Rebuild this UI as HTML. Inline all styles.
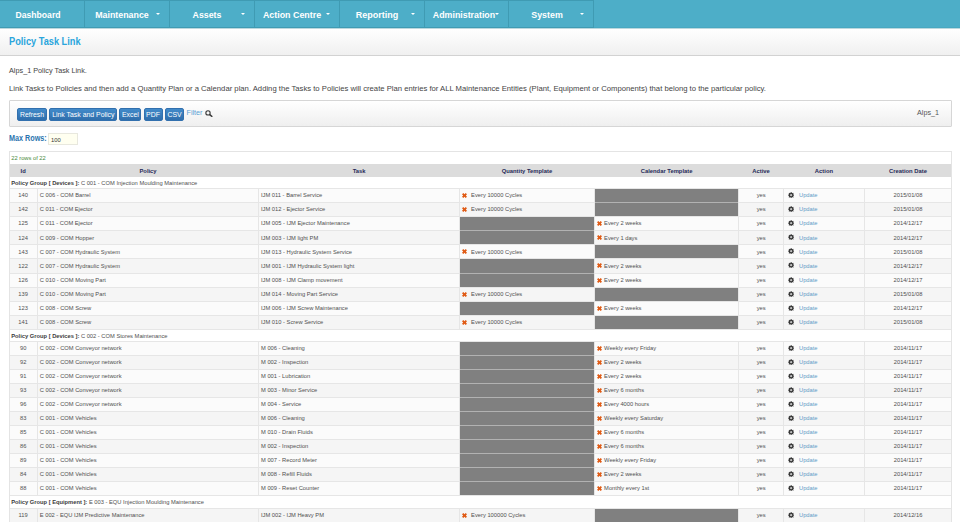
<!DOCTYPE html><html><head><meta charset="utf-8"><style>
html,body{margin:0;padding:0;}
body{width:960px;height:522px;overflow:hidden;background:#fff;position:relative;font-family:"Liberation Sans", sans-serif;}
div{box-sizing:border-box;}
.nav{position:absolute;left:0;top:0;width:960px;height:28px;background:#4daec8;border-bottom:1px solid #48a8c1;}
.ni{position:absolute;top:0;height:28px;border:1px solid #3f9bb3;border-left:none;}
.caret{position:absolute;width:0;height:0;border-left:2.3px solid transparent;border-right:2.3px solid transparent;border-top:2.7px solid #fff;}
.btn{position:absolute;top:107.5px;height:13px;border-radius:2px;background:linear-gradient(#428bca,#2f6eac);border:1px solid #3270ae;}
.hl{position:absolute;height:1px;}
.vl{position:absolute;width:1px;}
</style></head><body>
<div class="nav"></div>
<div style="position:absolute;left:0;top:28px;width:960px;height:1px;background:#bcd8de;z-index:1"></div>
<div class="ni" style="left:0px;width:85px"></div>
<div class="ni" style="left:85px;width:85px"></div>
<div class="ni" style="left:170px;width:85px"></div>
<div class="ni" style="left:255px;width:85px"></div>
<div class="ni" style="left:340px;width:85px"></div>
<div class="ni" style="left:425px;width:84px"></div>
<div class="ni" style="left:509px;width:85px"></div>
<div style="position:absolute;top:10px;font-size:9.4px;line-height:9.4px;color:#fff;white-space:nowrap;font-weight:bold;left:38.00px;transform-origin:0 0;transform: scaleX(0.921) translateX(-50%);">Dashboard</div>
<div style="position:absolute;top:10px;font-size:9.4px;line-height:9.4px;color:#fff;white-space:nowrap;font-weight:bold;left:122.35px;transform-origin:0 0;transform: scaleX(0.942) translateX(-50%);">Maintenance</div>
<div class="caret" style="left:156.00px;top:12.7px"></div>
<div style="position:absolute;top:10px;font-size:9.4px;line-height:9.4px;color:#fff;white-space:nowrap;font-weight:bold;left:207.20px;transform-origin:0 0;transform: scaleX(0.939) translateX(-50%);">Assets</div>
<div class="caret" style="left:240.70px;top:12.7px"></div>
<div style="position:absolute;top:10px;font-size:9.4px;line-height:9.4px;color:#fff;white-space:nowrap;font-weight:bold;left:292.40px;transform-origin:0 0;transform: scaleX(0.947) translateX(-50%);">Action Centre</div>
<div class="caret" style="left:325.70px;top:12.7px"></div>
<div style="position:absolute;top:10px;font-size:9.4px;line-height:9.4px;color:#fff;white-space:nowrap;font-weight:bold;left:377.00px;transform-origin:0 0;transform: scaleX(0.961) translateX(-50%);">Reporting</div>
<div class="caret" style="left:410.70px;top:12.7px"></div>
<div style="position:absolute;top:10px;font-size:9.4px;line-height:9.4px;color:#fff;white-space:nowrap;font-weight:bold;left:463.65px;transform-origin:0 0;transform: scaleX(0.942) translateX(-50%);">Administration</div>
<div class="caret" style="left:495.10px;top:12.7px"></div>
<div style="position:absolute;top:10px;font-size:9.4px;line-height:9.4px;color:#fff;white-space:nowrap;font-weight:bold;left:547.00px;transform-origin:0 0;transform: scaleX(0.945) translateX(-50%);">System</div>
<div class="caret" style="left:579.90px;top:12.7px"></div>
<div style="position:absolute;left:0;top:28px;width:960px;height:28px;background:linear-gradient(#ffffff,#f0f0f0);border-bottom:1px solid #d2d2d2"></div>
<div style="position:absolute;top:37px;font-size:10.0px;line-height:10.0px;color:#2aa5dc;white-space:nowrap;font-weight:bold;left:9.40px;transform-origin:0 0;transform: scaleX(0.922);">Policy Task Link</div>
<div style="position:absolute;top:67px;font-size:7.28px;line-height:7.28px;color:#444;white-space:nowrap;left:9.00px;transform-origin:0 0;">Alps_1 Policy Task Link.</div>
<div style="position:absolute;top:85px;font-size:7.67px;line-height:7.67px;color:#444;white-space:nowrap;left:9.00px;transform-origin:0 0;transform: scaleX(1.0035);">Link Tasks to Policies and then add a Quantity Plan or a Calendar plan. Adding the Tasks to Policies will create Plan entries for ALL Maintenance Entities (Plant, Equipment or Components) that belong to the particular policy.</div>
<div style="position:absolute;left:9px;top:100px;width:943px;height:27px;background:linear-gradient(#ffffff,#efefef);border:1px solid #d6d6d6;border-radius:1px"></div>
<div class="btn" style="left:17.10px;width:30.00px"></div>
<div style="position:absolute;top:112px;font-size:6.9px;line-height:6.9px;color:#fff;white-space:nowrap;left:32.10px;transform-origin:0 0;transform: translateX(-50%);">Refresh</div>
<div class="btn" style="left:49.10px;width:68.40px"></div>
<div style="position:absolute;top:112px;font-size:6.9px;line-height:6.9px;color:#fff;white-space:nowrap;left:83.30px;transform-origin:0 0;transform: translateX(-50%);">Link Task and Policy</div>
<div class="btn" style="left:119.40px;width:22.10px"></div>
<div style="position:absolute;top:112px;font-size:6.9px;line-height:6.9px;color:#fff;white-space:nowrap;left:130.45px;transform-origin:0 0;transform: translateX(-50%);">Excel</div>
<div class="btn" style="left:143.50px;width:19.00px"></div>
<div style="position:absolute;top:112px;font-size:6.9px;line-height:6.9px;color:#fff;white-space:nowrap;left:153.00px;transform-origin:0 0;transform: translateX(-50%);">PDF</div>
<div class="btn" style="left:164.60px;width:19.80px"></div>
<div style="position:absolute;top:112px;font-size:6.9px;line-height:6.9px;color:#fff;white-space:nowrap;left:174.50px;transform-origin:0 0;transform: translateX(-50%);">CSV</div>
<div style="position:absolute;top:109px;font-size:7.2px;line-height:7.2px;color:#5a9fd4;white-space:nowrap;left:186.50px;transform-origin:0 0;">Filter</div>
<svg style="position:absolute;left:205px;top:110px" width="8" height="7" viewBox="0 0 8 7"><circle cx="3" cy="2.9" r="2.15" fill="none" stroke="#3a3a3a" stroke-width="1.1"/><line x1="4.5" y1="4.4" x2="7.3" y2="6.8" stroke="#3a3a3a" stroke-width="1.5"/></svg>
<div style="position:absolute;top:109px;font-size:7.2px;line-height:7.2px;color:#555;white-space:nowrap;right:21.00px;transform-origin:100% 0;">Alps_1</div>
<div style="position:absolute;top:134px;font-size:8.5px;line-height:8.5px;color:#2a74ae;white-space:nowrap;font-weight:bold;left:8.85px;transform-origin:0 0;transform: scaleX(0.85);">Max Rows:</div>
<div style="position:absolute;left:48.4px;top:133.3px;width:29.2px;height:11.3px;background:#fffff0;border:1px solid #e8e8de"></div>
<div style="position:absolute;top:138px;font-size:5.8px;line-height:5.8px;color:#333;white-space:nowrap;left:51.00px;transform-origin:0 0;">100</div>
<div style="position:absolute;left:9.0px;top:151px;width:942.50px;height:400px;background:#fff;border:1px solid #e4e4e4"></div>
<div style="position:absolute;top:156px;font-size:5.75px;line-height:5.75px;color:#4a8a3a;white-space:nowrap;left:11.25px;transform-origin:0 0;">22 rows of 22</div>
<div style="position:absolute;left:10.0px;top:164px;width:941px;height:13px;background:#dcdcdc"></div>
<div style="position:absolute;top:169px;font-size:5.84px;line-height:5.84px;color:#262a58;white-space:nowrap;font-weight:bold;left:23.15px;transform-origin:0 0;transform: translateX(-50%);">Id</div>
<div style="position:absolute;top:169px;font-size:5.84px;line-height:5.84px;color:#262a58;white-space:nowrap;font-weight:bold;left:148.03px;transform-origin:0 0;transform: translateX(-50%);">Policy</div>
<div style="position:absolute;top:169px;font-size:5.84px;line-height:5.84px;color:#262a58;white-space:nowrap;font-weight:bold;left:359.07px;transform-origin:0 0;transform: translateX(-50%);">Task</div>
<div style="position:absolute;top:169px;font-size:5.84px;line-height:5.84px;color:#262a58;white-space:nowrap;font-weight:bold;left:526.95px;transform-origin:0 0;transform: translateX(-50%);">Quantity Template</div>
<div style="position:absolute;top:169px;font-size:5.84px;line-height:5.84px;color:#262a58;white-space:nowrap;font-weight:bold;left:666.62px;transform-origin:0 0;transform: translateX(-50%);">Calendar Template</div>
<div style="position:absolute;top:169px;font-size:5.84px;line-height:5.84px;color:#262a58;white-space:nowrap;font-weight:bold;left:761.12px;transform-origin:0 0;transform: translateX(-50%);">Active</div>
<div style="position:absolute;top:169px;font-size:5.84px;line-height:5.84px;color:#262a58;white-space:nowrap;font-weight:bold;left:823.95px;transform-origin:0 0;transform: translateX(-50%);">Action</div>
<div style="position:absolute;top:169px;font-size:5.84px;line-height:5.84px;color:#262a58;white-space:nowrap;font-weight:bold;left:907.95px;transform-origin:0 0;transform: translateX(-50%);">Creation Date</div>
<div style="position:absolute;left:10.0px;top:177px;width:941px;height:11px;background:#fff"></div>
<div style="position:absolute;left:10.0px;top:188px;width:941px;height:14px;background:#fbfbfb"></div>
<div style="position:absolute;left:10.0px;top:202px;width:941px;height:14px;background:#f5f5f5"></div>
<div style="position:absolute;left:10.0px;top:216px;width:941px;height:14px;background:#fbfbfb"></div>
<div style="position:absolute;left:10.0px;top:230px;width:941px;height:14px;background:#f5f5f5"></div>
<div style="position:absolute;left:10.0px;top:244px;width:941px;height:14px;background:#fbfbfb"></div>
<div style="position:absolute;left:10.0px;top:258px;width:941px;height:15px;background:#f5f5f5"></div>
<div style="position:absolute;left:10.0px;top:273px;width:941px;height:14px;background:#fbfbfb"></div>
<div style="position:absolute;left:10.0px;top:287px;width:941px;height:14px;background:#f5f5f5"></div>
<div style="position:absolute;left:10.0px;top:301px;width:941px;height:14px;background:#fbfbfb"></div>
<div style="position:absolute;left:10.0px;top:315px;width:941px;height:14px;background:#f5f5f5"></div>
<div style="position:absolute;left:10.0px;top:329px;width:941px;height:12px;background:#fff"></div>
<div style="position:absolute;left:10.0px;top:341px;width:941px;height:14px;background:#fbfbfb"></div>
<div style="position:absolute;left:10.0px;top:355px;width:941px;height:14px;background:#f5f5f5"></div>
<div style="position:absolute;left:10.0px;top:369px;width:941px;height:14px;background:#fbfbfb"></div>
<div style="position:absolute;left:10.0px;top:383px;width:941px;height:14px;background:#f5f5f5"></div>
<div style="position:absolute;left:10.0px;top:397px;width:941px;height:14px;background:#fbfbfb"></div>
<div style="position:absolute;left:10.0px;top:411px;width:941px;height:14px;background:#f5f5f5"></div>
<div style="position:absolute;left:10.0px;top:425px;width:941px;height:14px;background:#fbfbfb"></div>
<div style="position:absolute;left:10.0px;top:439px;width:941px;height:14px;background:#f5f5f5"></div>
<div style="position:absolute;left:10.0px;top:453px;width:941px;height:14px;background:#fbfbfb"></div>
<div style="position:absolute;left:10.0px;top:467px;width:941px;height:14px;background:#f5f5f5"></div>
<div style="position:absolute;left:10.0px;top:481px;width:941px;height:14px;background:#fbfbfb"></div>
<div style="position:absolute;left:10.0px;top:495px;width:941px;height:13px;background:#fff"></div>
<div style="position:absolute;left:10.0px;top:508px;width:941px;height:14px;background:#f5f5f5"></div>
<div class="hl" style="left:10.0px;top:188px;width:941px;background:#e6e6e6"></div>
<div class="hl" style="left:10.0px;top:202px;width:941px;background:#e6e6e6"></div>
<div class="hl" style="left:10.0px;top:216px;width:941px;background:#e6e6e6"></div>
<div class="hl" style="left:10.0px;top:230px;width:941px;background:#e6e6e6"></div>
<div class="hl" style="left:10.0px;top:244px;width:941px;background:#e6e6e6"></div>
<div class="hl" style="left:10.0px;top:258px;width:941px;background:#e6e6e6"></div>
<div class="hl" style="left:10.0px;top:273px;width:941px;background:#e6e6e6"></div>
<div class="hl" style="left:10.0px;top:287px;width:941px;background:#e6e6e6"></div>
<div class="hl" style="left:10.0px;top:301px;width:941px;background:#e6e6e6"></div>
<div class="hl" style="left:10.0px;top:315px;width:941px;background:#e6e6e6"></div>
<div class="hl" style="left:10.0px;top:329px;width:941px;background:#e6e6e6"></div>
<div class="hl" style="left:10.0px;top:341px;width:941px;background:#e6e6e6"></div>
<div class="hl" style="left:10.0px;top:355px;width:941px;background:#e6e6e6"></div>
<div class="hl" style="left:10.0px;top:369px;width:941px;background:#e6e6e6"></div>
<div class="hl" style="left:10.0px;top:383px;width:941px;background:#e6e6e6"></div>
<div class="hl" style="left:10.0px;top:397px;width:941px;background:#e6e6e6"></div>
<div class="hl" style="left:10.0px;top:411px;width:941px;background:#e6e6e6"></div>
<div class="hl" style="left:10.0px;top:425px;width:941px;background:#e6e6e6"></div>
<div class="hl" style="left:10.0px;top:439px;width:941px;background:#e6e6e6"></div>
<div class="hl" style="left:10.0px;top:453px;width:941px;background:#e6e6e6"></div>
<div class="hl" style="left:10.0px;top:467px;width:941px;background:#e6e6e6"></div>
<div class="hl" style="left:10.0px;top:481px;width:941px;background:#e6e6e6"></div>
<div class="hl" style="left:10.0px;top:495px;width:941px;background:#e6e6e6"></div>
<div class="hl" style="left:10.0px;top:508px;width:941px;background:#e6e6e6"></div>
<div class="vl" style="left:37px;top:188px;height:14px;background:#e6e6e6"></div>
<div class="vl" style="left:258px;top:188px;height:14px;background:#e6e6e6"></div>
<div class="vl" style="left:459px;top:188px;height:14px;background:#e6e6e6"></div>
<div class="vl" style="left:594px;top:188px;height:14px;background:#e6e6e6"></div>
<div class="vl" style="left:738px;top:188px;height:14px;background:#e6e6e6"></div>
<div class="vl" style="left:783px;top:188px;height:14px;background:#e6e6e6"></div>
<div class="vl" style="left:864px;top:188px;height:14px;background:#e6e6e6"></div>
<div class="vl" style="left:37px;top:202px;height:14px;background:#e6e6e6"></div>
<div class="vl" style="left:258px;top:202px;height:14px;background:#e6e6e6"></div>
<div class="vl" style="left:459px;top:202px;height:14px;background:#e6e6e6"></div>
<div class="vl" style="left:594px;top:202px;height:14px;background:#e6e6e6"></div>
<div class="vl" style="left:738px;top:202px;height:14px;background:#e6e6e6"></div>
<div class="vl" style="left:783px;top:202px;height:14px;background:#e6e6e6"></div>
<div class="vl" style="left:864px;top:202px;height:14px;background:#e6e6e6"></div>
<div class="vl" style="left:37px;top:216px;height:14px;background:#e6e6e6"></div>
<div class="vl" style="left:258px;top:216px;height:14px;background:#e6e6e6"></div>
<div class="vl" style="left:459px;top:216px;height:14px;background:#e6e6e6"></div>
<div class="vl" style="left:594px;top:216px;height:14px;background:#e6e6e6"></div>
<div class="vl" style="left:738px;top:216px;height:14px;background:#e6e6e6"></div>
<div class="vl" style="left:783px;top:216px;height:14px;background:#e6e6e6"></div>
<div class="vl" style="left:864px;top:216px;height:14px;background:#e6e6e6"></div>
<div class="vl" style="left:37px;top:230px;height:14px;background:#e6e6e6"></div>
<div class="vl" style="left:258px;top:230px;height:14px;background:#e6e6e6"></div>
<div class="vl" style="left:459px;top:230px;height:14px;background:#e6e6e6"></div>
<div class="vl" style="left:594px;top:230px;height:14px;background:#e6e6e6"></div>
<div class="vl" style="left:738px;top:230px;height:14px;background:#e6e6e6"></div>
<div class="vl" style="left:783px;top:230px;height:14px;background:#e6e6e6"></div>
<div class="vl" style="left:864px;top:230px;height:14px;background:#e6e6e6"></div>
<div class="vl" style="left:37px;top:244px;height:14px;background:#e6e6e6"></div>
<div class="vl" style="left:258px;top:244px;height:14px;background:#e6e6e6"></div>
<div class="vl" style="left:459px;top:244px;height:14px;background:#e6e6e6"></div>
<div class="vl" style="left:594px;top:244px;height:14px;background:#e6e6e6"></div>
<div class="vl" style="left:738px;top:244px;height:14px;background:#e6e6e6"></div>
<div class="vl" style="left:783px;top:244px;height:14px;background:#e6e6e6"></div>
<div class="vl" style="left:864px;top:244px;height:14px;background:#e6e6e6"></div>
<div class="vl" style="left:37px;top:258px;height:15px;background:#e6e6e6"></div>
<div class="vl" style="left:258px;top:258px;height:15px;background:#e6e6e6"></div>
<div class="vl" style="left:459px;top:258px;height:15px;background:#e6e6e6"></div>
<div class="vl" style="left:594px;top:258px;height:15px;background:#e6e6e6"></div>
<div class="vl" style="left:738px;top:258px;height:15px;background:#e6e6e6"></div>
<div class="vl" style="left:783px;top:258px;height:15px;background:#e6e6e6"></div>
<div class="vl" style="left:864px;top:258px;height:15px;background:#e6e6e6"></div>
<div class="vl" style="left:37px;top:273px;height:14px;background:#e6e6e6"></div>
<div class="vl" style="left:258px;top:273px;height:14px;background:#e6e6e6"></div>
<div class="vl" style="left:459px;top:273px;height:14px;background:#e6e6e6"></div>
<div class="vl" style="left:594px;top:273px;height:14px;background:#e6e6e6"></div>
<div class="vl" style="left:738px;top:273px;height:14px;background:#e6e6e6"></div>
<div class="vl" style="left:783px;top:273px;height:14px;background:#e6e6e6"></div>
<div class="vl" style="left:864px;top:273px;height:14px;background:#e6e6e6"></div>
<div class="vl" style="left:37px;top:287px;height:14px;background:#e6e6e6"></div>
<div class="vl" style="left:258px;top:287px;height:14px;background:#e6e6e6"></div>
<div class="vl" style="left:459px;top:287px;height:14px;background:#e6e6e6"></div>
<div class="vl" style="left:594px;top:287px;height:14px;background:#e6e6e6"></div>
<div class="vl" style="left:738px;top:287px;height:14px;background:#e6e6e6"></div>
<div class="vl" style="left:783px;top:287px;height:14px;background:#e6e6e6"></div>
<div class="vl" style="left:864px;top:287px;height:14px;background:#e6e6e6"></div>
<div class="vl" style="left:37px;top:301px;height:14px;background:#e6e6e6"></div>
<div class="vl" style="left:258px;top:301px;height:14px;background:#e6e6e6"></div>
<div class="vl" style="left:459px;top:301px;height:14px;background:#e6e6e6"></div>
<div class="vl" style="left:594px;top:301px;height:14px;background:#e6e6e6"></div>
<div class="vl" style="left:738px;top:301px;height:14px;background:#e6e6e6"></div>
<div class="vl" style="left:783px;top:301px;height:14px;background:#e6e6e6"></div>
<div class="vl" style="left:864px;top:301px;height:14px;background:#e6e6e6"></div>
<div class="vl" style="left:37px;top:315px;height:14px;background:#e6e6e6"></div>
<div class="vl" style="left:258px;top:315px;height:14px;background:#e6e6e6"></div>
<div class="vl" style="left:459px;top:315px;height:14px;background:#e6e6e6"></div>
<div class="vl" style="left:594px;top:315px;height:14px;background:#e6e6e6"></div>
<div class="vl" style="left:738px;top:315px;height:14px;background:#e6e6e6"></div>
<div class="vl" style="left:783px;top:315px;height:14px;background:#e6e6e6"></div>
<div class="vl" style="left:864px;top:315px;height:14px;background:#e6e6e6"></div>
<div class="vl" style="left:37px;top:341px;height:14px;background:#e6e6e6"></div>
<div class="vl" style="left:258px;top:341px;height:14px;background:#e6e6e6"></div>
<div class="vl" style="left:459px;top:341px;height:14px;background:#e6e6e6"></div>
<div class="vl" style="left:594px;top:341px;height:14px;background:#e6e6e6"></div>
<div class="vl" style="left:738px;top:341px;height:14px;background:#e6e6e6"></div>
<div class="vl" style="left:783px;top:341px;height:14px;background:#e6e6e6"></div>
<div class="vl" style="left:864px;top:341px;height:14px;background:#e6e6e6"></div>
<div class="vl" style="left:37px;top:355px;height:14px;background:#e6e6e6"></div>
<div class="vl" style="left:258px;top:355px;height:14px;background:#e6e6e6"></div>
<div class="vl" style="left:459px;top:355px;height:14px;background:#e6e6e6"></div>
<div class="vl" style="left:594px;top:355px;height:14px;background:#e6e6e6"></div>
<div class="vl" style="left:738px;top:355px;height:14px;background:#e6e6e6"></div>
<div class="vl" style="left:783px;top:355px;height:14px;background:#e6e6e6"></div>
<div class="vl" style="left:864px;top:355px;height:14px;background:#e6e6e6"></div>
<div class="vl" style="left:37px;top:369px;height:14px;background:#e6e6e6"></div>
<div class="vl" style="left:258px;top:369px;height:14px;background:#e6e6e6"></div>
<div class="vl" style="left:459px;top:369px;height:14px;background:#e6e6e6"></div>
<div class="vl" style="left:594px;top:369px;height:14px;background:#e6e6e6"></div>
<div class="vl" style="left:738px;top:369px;height:14px;background:#e6e6e6"></div>
<div class="vl" style="left:783px;top:369px;height:14px;background:#e6e6e6"></div>
<div class="vl" style="left:864px;top:369px;height:14px;background:#e6e6e6"></div>
<div class="vl" style="left:37px;top:383px;height:14px;background:#e6e6e6"></div>
<div class="vl" style="left:258px;top:383px;height:14px;background:#e6e6e6"></div>
<div class="vl" style="left:459px;top:383px;height:14px;background:#e6e6e6"></div>
<div class="vl" style="left:594px;top:383px;height:14px;background:#e6e6e6"></div>
<div class="vl" style="left:738px;top:383px;height:14px;background:#e6e6e6"></div>
<div class="vl" style="left:783px;top:383px;height:14px;background:#e6e6e6"></div>
<div class="vl" style="left:864px;top:383px;height:14px;background:#e6e6e6"></div>
<div class="vl" style="left:37px;top:397px;height:14px;background:#e6e6e6"></div>
<div class="vl" style="left:258px;top:397px;height:14px;background:#e6e6e6"></div>
<div class="vl" style="left:459px;top:397px;height:14px;background:#e6e6e6"></div>
<div class="vl" style="left:594px;top:397px;height:14px;background:#e6e6e6"></div>
<div class="vl" style="left:738px;top:397px;height:14px;background:#e6e6e6"></div>
<div class="vl" style="left:783px;top:397px;height:14px;background:#e6e6e6"></div>
<div class="vl" style="left:864px;top:397px;height:14px;background:#e6e6e6"></div>
<div class="vl" style="left:37px;top:411px;height:14px;background:#e6e6e6"></div>
<div class="vl" style="left:258px;top:411px;height:14px;background:#e6e6e6"></div>
<div class="vl" style="left:459px;top:411px;height:14px;background:#e6e6e6"></div>
<div class="vl" style="left:594px;top:411px;height:14px;background:#e6e6e6"></div>
<div class="vl" style="left:738px;top:411px;height:14px;background:#e6e6e6"></div>
<div class="vl" style="left:783px;top:411px;height:14px;background:#e6e6e6"></div>
<div class="vl" style="left:864px;top:411px;height:14px;background:#e6e6e6"></div>
<div class="vl" style="left:37px;top:425px;height:14px;background:#e6e6e6"></div>
<div class="vl" style="left:258px;top:425px;height:14px;background:#e6e6e6"></div>
<div class="vl" style="left:459px;top:425px;height:14px;background:#e6e6e6"></div>
<div class="vl" style="left:594px;top:425px;height:14px;background:#e6e6e6"></div>
<div class="vl" style="left:738px;top:425px;height:14px;background:#e6e6e6"></div>
<div class="vl" style="left:783px;top:425px;height:14px;background:#e6e6e6"></div>
<div class="vl" style="left:864px;top:425px;height:14px;background:#e6e6e6"></div>
<div class="vl" style="left:37px;top:439px;height:14px;background:#e6e6e6"></div>
<div class="vl" style="left:258px;top:439px;height:14px;background:#e6e6e6"></div>
<div class="vl" style="left:459px;top:439px;height:14px;background:#e6e6e6"></div>
<div class="vl" style="left:594px;top:439px;height:14px;background:#e6e6e6"></div>
<div class="vl" style="left:738px;top:439px;height:14px;background:#e6e6e6"></div>
<div class="vl" style="left:783px;top:439px;height:14px;background:#e6e6e6"></div>
<div class="vl" style="left:864px;top:439px;height:14px;background:#e6e6e6"></div>
<div class="vl" style="left:37px;top:453px;height:14px;background:#e6e6e6"></div>
<div class="vl" style="left:258px;top:453px;height:14px;background:#e6e6e6"></div>
<div class="vl" style="left:459px;top:453px;height:14px;background:#e6e6e6"></div>
<div class="vl" style="left:594px;top:453px;height:14px;background:#e6e6e6"></div>
<div class="vl" style="left:738px;top:453px;height:14px;background:#e6e6e6"></div>
<div class="vl" style="left:783px;top:453px;height:14px;background:#e6e6e6"></div>
<div class="vl" style="left:864px;top:453px;height:14px;background:#e6e6e6"></div>
<div class="vl" style="left:37px;top:467px;height:14px;background:#e6e6e6"></div>
<div class="vl" style="left:258px;top:467px;height:14px;background:#e6e6e6"></div>
<div class="vl" style="left:459px;top:467px;height:14px;background:#e6e6e6"></div>
<div class="vl" style="left:594px;top:467px;height:14px;background:#e6e6e6"></div>
<div class="vl" style="left:738px;top:467px;height:14px;background:#e6e6e6"></div>
<div class="vl" style="left:783px;top:467px;height:14px;background:#e6e6e6"></div>
<div class="vl" style="left:864px;top:467px;height:14px;background:#e6e6e6"></div>
<div class="vl" style="left:37px;top:481px;height:14px;background:#e6e6e6"></div>
<div class="vl" style="left:258px;top:481px;height:14px;background:#e6e6e6"></div>
<div class="vl" style="left:459px;top:481px;height:14px;background:#e6e6e6"></div>
<div class="vl" style="left:594px;top:481px;height:14px;background:#e6e6e6"></div>
<div class="vl" style="left:738px;top:481px;height:14px;background:#e6e6e6"></div>
<div class="vl" style="left:783px;top:481px;height:14px;background:#e6e6e6"></div>
<div class="vl" style="left:864px;top:481px;height:14px;background:#e6e6e6"></div>
<div class="vl" style="left:37px;top:508px;height:14px;background:#e6e6e6"></div>
<div class="vl" style="left:258px;top:508px;height:14px;background:#e6e6e6"></div>
<div class="vl" style="left:459px;top:508px;height:14px;background:#e6e6e6"></div>
<div class="vl" style="left:594px;top:508px;height:14px;background:#e6e6e6"></div>
<div class="vl" style="left:738px;top:508px;height:14px;background:#e6e6e6"></div>
<div class="vl" style="left:783px;top:508px;height:14px;background:#e6e6e6"></div>
<div class="vl" style="left:864px;top:508px;height:14px;background:#e6e6e6"></div>
<div style="position:absolute;left:595px;top:189px;width:143px;height:13px;background:#808080"></div>
<div style="position:absolute;left:595px;top:203px;width:143px;height:13px;background:#808080"></div>
<div class="hl" style="left:595px;top:202px;width:143px;background:#b2b2b2"></div>
<div style="position:absolute;left:460px;top:217px;width:134px;height:13px;background:#808080"></div>
<div style="position:absolute;left:460px;top:231px;width:134px;height:13px;background:#808080"></div>
<div class="hl" style="left:460px;top:230px;width:134px;background:#b2b2b2"></div>
<div style="position:absolute;left:595px;top:245px;width:143px;height:13px;background:#808080"></div>
<div style="position:absolute;left:460px;top:259px;width:134px;height:14px;background:#808080"></div>
<div style="position:absolute;left:460px;top:274px;width:134px;height:13px;background:#808080"></div>
<div class="hl" style="left:460px;top:273px;width:134px;background:#b2b2b2"></div>
<div style="position:absolute;left:595px;top:288px;width:143px;height:13px;background:#808080"></div>
<div style="position:absolute;left:460px;top:302px;width:134px;height:13px;background:#808080"></div>
<div style="position:absolute;left:595px;top:316px;width:143px;height:13px;background:#808080"></div>
<div style="position:absolute;left:460px;top:342px;width:134px;height:13px;background:#808080"></div>
<div style="position:absolute;left:460px;top:356px;width:134px;height:13px;background:#808080"></div>
<div class="hl" style="left:460px;top:355px;width:134px;background:#b2b2b2"></div>
<div style="position:absolute;left:460px;top:370px;width:134px;height:13px;background:#808080"></div>
<div class="hl" style="left:460px;top:369px;width:134px;background:#b2b2b2"></div>
<div style="position:absolute;left:460px;top:384px;width:134px;height:13px;background:#808080"></div>
<div class="hl" style="left:460px;top:383px;width:134px;background:#b2b2b2"></div>
<div style="position:absolute;left:460px;top:398px;width:134px;height:13px;background:#808080"></div>
<div class="hl" style="left:460px;top:397px;width:134px;background:#b2b2b2"></div>
<div style="position:absolute;left:460px;top:412px;width:134px;height:13px;background:#808080"></div>
<div class="hl" style="left:460px;top:411px;width:134px;background:#b2b2b2"></div>
<div style="position:absolute;left:460px;top:426px;width:134px;height:13px;background:#808080"></div>
<div class="hl" style="left:460px;top:425px;width:134px;background:#b2b2b2"></div>
<div style="position:absolute;left:460px;top:440px;width:134px;height:13px;background:#808080"></div>
<div class="hl" style="left:460px;top:439px;width:134px;background:#b2b2b2"></div>
<div style="position:absolute;left:460px;top:454px;width:134px;height:13px;background:#808080"></div>
<div class="hl" style="left:460px;top:453px;width:134px;background:#b2b2b2"></div>
<div style="position:absolute;left:460px;top:468px;width:134px;height:13px;background:#808080"></div>
<div class="hl" style="left:460px;top:467px;width:134px;background:#b2b2b2"></div>
<div style="position:absolute;left:460px;top:482px;width:134px;height:13px;background:#808080"></div>
<div class="hl" style="left:460px;top:481px;width:134px;background:#b2b2b2"></div>
<div style="position:absolute;left:595px;top:509px;width:143px;height:13px;background:#808080"></div>
<div style="position:absolute;top:181px;font-size:5.75px;line-height:5.75px;color:#505050;white-space:nowrap;left:11.25px;transform-origin:0 0;"><b style="color:#3c3c3c">Policy Group [ Devices ]:</b> C 001 - COM Injection Moulding Maintenance</div>
<div style="position:absolute;top:193px;font-size:5.75px;line-height:5.75px;color:#505050;white-space:nowrap;left:23.15px;transform-origin:0 0;transform: translateX(-50%);">140</div>
<div style="position:absolute;top:193px;font-size:5.75px;line-height:5.75px;color:#505050;white-space:nowrap;left:39.75px;transform-origin:0 0;">C 006 - COM Barrel</div>
<div style="position:absolute;top:193px;font-size:5.75px;line-height:5.75px;color:#505050;white-space:nowrap;left:261.00px;transform-origin:0 0;">IJM 011 - Barrel Service</div>
<svg style="position:absolute;left:462.30px;top:193.20px" width="5" height="5" viewBox="0 0 10 10"><path d="M0 2.6 L2.6 0 L5 2.4 L7.4 0 L10 2.6 L7.6 5 L10 7.4 L7.4 10 L5 7.6 L2.6 10 L0 7.4 L2.4 5 Z" fill="#e05a14"/></svg>
<div style="position:absolute;top:193px;font-size:5.75px;line-height:5.75px;color:#505050;white-space:nowrap;left:471.10px;transform-origin:0 0;">Every 10000 Cycles</div>
<div style="position:absolute;top:193px;font-size:5.75px;line-height:5.75px;color:#505050;white-space:nowrap;left:761.12px;transform-origin:0 0;transform: translateX(-50%);">yes</div>
<svg style="position:absolute;left:788.10px;top:191.90px" width="6.3" height="6.3" viewBox="0 0 16 16"><path fill="#333" fill-rule="evenodd" d="M13.64 6.65 L15.92 6.87 L15.92 9.13 L13.64 9.35 L12.95 11.03 L14.40 12.80 L12.80 14.40 L11.03 12.95 L9.35 13.64 L9.13 15.92 L6.87 15.92 L6.65 13.64 L4.97 12.95 L3.20 14.40 L1.60 12.80 L3.05 11.03 L2.36 9.35 L0.08 9.13 L0.08 6.87 L2.36 6.65 L3.05 4.97 L1.60 3.20 L3.20 1.60 L4.97 3.05 L6.65 2.36 L6.87 0.08 L9.13 0.08 L9.35 2.36 L11.03 3.05 L12.80 1.60 L14.40 3.20 L12.95 4.97Z "/><circle cx="8" cy="8" r="2.9" fill="#c0c0c0"/></svg>
<div style="position:absolute;top:193px;font-size:5.75px;line-height:5.75px;color:#5f9bc8;white-space:nowrap;left:799.00px;transform-origin:0 0;">Update</div>
<div style="position:absolute;top:193px;font-size:5.75px;line-height:5.75px;color:#505050;white-space:nowrap;left:907.95px;transform-origin:0 0;transform: translateX(-50%);">2015/01/08</div>
<div style="position:absolute;top:207px;font-size:5.75px;line-height:5.75px;color:#505050;white-space:nowrap;left:23.15px;transform-origin:0 0;transform: translateX(-50%);">142</div>
<div style="position:absolute;top:207px;font-size:5.75px;line-height:5.75px;color:#505050;white-space:nowrap;left:39.75px;transform-origin:0 0;">C 011 - COM Ejector</div>
<div style="position:absolute;top:207px;font-size:5.75px;line-height:5.75px;color:#505050;white-space:nowrap;left:261.00px;transform-origin:0 0;">IJM 012 - Ejector Service</div>
<svg style="position:absolute;left:462.30px;top:207.20px" width="5" height="5" viewBox="0 0 10 10"><path d="M0 2.6 L2.6 0 L5 2.4 L7.4 0 L10 2.6 L7.6 5 L10 7.4 L7.4 10 L5 7.6 L2.6 10 L0 7.4 L2.4 5 Z" fill="#e05a14"/></svg>
<div style="position:absolute;top:207px;font-size:5.75px;line-height:5.75px;color:#505050;white-space:nowrap;left:471.10px;transform-origin:0 0;">Every 10000 Cycles</div>
<div style="position:absolute;top:207px;font-size:5.75px;line-height:5.75px;color:#505050;white-space:nowrap;left:761.12px;transform-origin:0 0;transform: translateX(-50%);">yes</div>
<svg style="position:absolute;left:788.10px;top:205.90px" width="6.3" height="6.3" viewBox="0 0 16 16"><path fill="#333" fill-rule="evenodd" d="M13.64 6.65 L15.92 6.87 L15.92 9.13 L13.64 9.35 L12.95 11.03 L14.40 12.80 L12.80 14.40 L11.03 12.95 L9.35 13.64 L9.13 15.92 L6.87 15.92 L6.65 13.64 L4.97 12.95 L3.20 14.40 L1.60 12.80 L3.05 11.03 L2.36 9.35 L0.08 9.13 L0.08 6.87 L2.36 6.65 L3.05 4.97 L1.60 3.20 L3.20 1.60 L4.97 3.05 L6.65 2.36 L6.87 0.08 L9.13 0.08 L9.35 2.36 L11.03 3.05 L12.80 1.60 L14.40 3.20 L12.95 4.97Z "/><circle cx="8" cy="8" r="2.9" fill="#c0c0c0"/></svg>
<div style="position:absolute;top:207px;font-size:5.75px;line-height:5.75px;color:#5f9bc8;white-space:nowrap;left:799.00px;transform-origin:0 0;">Update</div>
<div style="position:absolute;top:207px;font-size:5.75px;line-height:5.75px;color:#505050;white-space:nowrap;left:907.95px;transform-origin:0 0;transform: translateX(-50%);">2015/01/08</div>
<div style="position:absolute;top:221px;font-size:5.75px;line-height:5.75px;color:#505050;white-space:nowrap;left:23.15px;transform-origin:0 0;transform: translateX(-50%);">125</div>
<div style="position:absolute;top:221px;font-size:5.75px;line-height:5.75px;color:#505050;white-space:nowrap;left:39.75px;transform-origin:0 0;">C 011 - COM Ejector</div>
<div style="position:absolute;top:221px;font-size:5.75px;line-height:5.75px;color:#505050;white-space:nowrap;left:261.00px;transform-origin:0 0;">IJM 005 - IJM Ejector Maintenance</div>
<svg style="position:absolute;left:596.90px;top:221.20px" width="5" height="5" viewBox="0 0 10 10"><path d="M0 2.6 L2.6 0 L5 2.4 L7.4 0 L10 2.6 L7.6 5 L10 7.4 L7.4 10 L5 7.6 L2.6 10 L0 7.4 L2.4 5 Z" fill="#e05a14"/></svg>
<div style="position:absolute;top:221px;font-size:5.75px;line-height:5.75px;color:#505050;white-space:nowrap;left:604.10px;transform-origin:0 0;">Every 2 weeks</div>
<div style="position:absolute;top:221px;font-size:5.75px;line-height:5.75px;color:#505050;white-space:nowrap;left:761.12px;transform-origin:0 0;transform: translateX(-50%);">yes</div>
<svg style="position:absolute;left:788.10px;top:219.90px" width="6.3" height="6.3" viewBox="0 0 16 16"><path fill="#333" fill-rule="evenodd" d="M13.64 6.65 L15.92 6.87 L15.92 9.13 L13.64 9.35 L12.95 11.03 L14.40 12.80 L12.80 14.40 L11.03 12.95 L9.35 13.64 L9.13 15.92 L6.87 15.92 L6.65 13.64 L4.97 12.95 L3.20 14.40 L1.60 12.80 L3.05 11.03 L2.36 9.35 L0.08 9.13 L0.08 6.87 L2.36 6.65 L3.05 4.97 L1.60 3.20 L3.20 1.60 L4.97 3.05 L6.65 2.36 L6.87 0.08 L9.13 0.08 L9.35 2.36 L11.03 3.05 L12.80 1.60 L14.40 3.20 L12.95 4.97Z "/><circle cx="8" cy="8" r="2.9" fill="#c0c0c0"/></svg>
<div style="position:absolute;top:221px;font-size:5.75px;line-height:5.75px;color:#5f9bc8;white-space:nowrap;left:799.00px;transform-origin:0 0;">Update</div>
<div style="position:absolute;top:221px;font-size:5.75px;line-height:5.75px;color:#505050;white-space:nowrap;left:907.95px;transform-origin:0 0;transform: translateX(-50%);">2014/12/17</div>
<div style="position:absolute;top:236px;font-size:5.75px;line-height:5.75px;color:#505050;white-space:nowrap;left:23.15px;transform-origin:0 0;transform: translateX(-50%);">124</div>
<div style="position:absolute;top:236px;font-size:5.75px;line-height:5.75px;color:#505050;white-space:nowrap;left:39.75px;transform-origin:0 0;">C 009 - COM Hopper</div>
<div style="position:absolute;top:236px;font-size:5.75px;line-height:5.75px;color:#505050;white-space:nowrap;left:261.00px;transform-origin:0 0;">IJM 003 - IJM light PM</div>
<svg style="position:absolute;left:596.90px;top:235.20px" width="5" height="5" viewBox="0 0 10 10"><path d="M0 2.6 L2.6 0 L5 2.4 L7.4 0 L10 2.6 L7.6 5 L10 7.4 L7.4 10 L5 7.6 L2.6 10 L0 7.4 L2.4 5 Z" fill="#e05a14"/></svg>
<div style="position:absolute;top:236px;font-size:5.75px;line-height:5.75px;color:#505050;white-space:nowrap;left:604.10px;transform-origin:0 0;">Every 1 days</div>
<div style="position:absolute;top:236px;font-size:5.75px;line-height:5.75px;color:#505050;white-space:nowrap;left:761.12px;transform-origin:0 0;transform: translateX(-50%);">yes</div>
<svg style="position:absolute;left:788.10px;top:233.90px" width="6.3" height="6.3" viewBox="0 0 16 16"><path fill="#333" fill-rule="evenodd" d="M13.64 6.65 L15.92 6.87 L15.92 9.13 L13.64 9.35 L12.95 11.03 L14.40 12.80 L12.80 14.40 L11.03 12.95 L9.35 13.64 L9.13 15.92 L6.87 15.92 L6.65 13.64 L4.97 12.95 L3.20 14.40 L1.60 12.80 L3.05 11.03 L2.36 9.35 L0.08 9.13 L0.08 6.87 L2.36 6.65 L3.05 4.97 L1.60 3.20 L3.20 1.60 L4.97 3.05 L6.65 2.36 L6.87 0.08 L9.13 0.08 L9.35 2.36 L11.03 3.05 L12.80 1.60 L14.40 3.20 L12.95 4.97Z "/><circle cx="8" cy="8" r="2.9" fill="#c0c0c0"/></svg>
<div style="position:absolute;top:236px;font-size:5.75px;line-height:5.75px;color:#5f9bc8;white-space:nowrap;left:799.00px;transform-origin:0 0;">Update</div>
<div style="position:absolute;top:236px;font-size:5.75px;line-height:5.75px;color:#505050;white-space:nowrap;left:907.95px;transform-origin:0 0;transform: translateX(-50%);">2014/12/17</div>
<div style="position:absolute;top:250px;font-size:5.75px;line-height:5.75px;color:#505050;white-space:nowrap;left:23.15px;transform-origin:0 0;transform: translateX(-50%);">143</div>
<div style="position:absolute;top:250px;font-size:5.75px;line-height:5.75px;color:#505050;white-space:nowrap;left:39.75px;transform-origin:0 0;">C 007 - COM Hydraulic System</div>
<div style="position:absolute;top:250px;font-size:5.75px;line-height:5.75px;color:#505050;white-space:nowrap;left:261.00px;transform-origin:0 0;">IJM 013 - Hydraulic System Service</div>
<svg style="position:absolute;left:462.30px;top:249.20px" width="5" height="5" viewBox="0 0 10 10"><path d="M0 2.6 L2.6 0 L5 2.4 L7.4 0 L10 2.6 L7.6 5 L10 7.4 L7.4 10 L5 7.6 L2.6 10 L0 7.4 L2.4 5 Z" fill="#e05a14"/></svg>
<div style="position:absolute;top:250px;font-size:5.75px;line-height:5.75px;color:#505050;white-space:nowrap;left:471.10px;transform-origin:0 0;">Every 10000 Cycles</div>
<div style="position:absolute;top:250px;font-size:5.75px;line-height:5.75px;color:#505050;white-space:nowrap;left:761.12px;transform-origin:0 0;transform: translateX(-50%);">yes</div>
<svg style="position:absolute;left:788.10px;top:247.90px" width="6.3" height="6.3" viewBox="0 0 16 16"><path fill="#333" fill-rule="evenodd" d="M13.64 6.65 L15.92 6.87 L15.92 9.13 L13.64 9.35 L12.95 11.03 L14.40 12.80 L12.80 14.40 L11.03 12.95 L9.35 13.64 L9.13 15.92 L6.87 15.92 L6.65 13.64 L4.97 12.95 L3.20 14.40 L1.60 12.80 L3.05 11.03 L2.36 9.35 L0.08 9.13 L0.08 6.87 L2.36 6.65 L3.05 4.97 L1.60 3.20 L3.20 1.60 L4.97 3.05 L6.65 2.36 L6.87 0.08 L9.13 0.08 L9.35 2.36 L11.03 3.05 L12.80 1.60 L14.40 3.20 L12.95 4.97Z "/><circle cx="8" cy="8" r="2.9" fill="#c0c0c0"/></svg>
<div style="position:absolute;top:250px;font-size:5.75px;line-height:5.75px;color:#5f9bc8;white-space:nowrap;left:799.00px;transform-origin:0 0;">Update</div>
<div style="position:absolute;top:250px;font-size:5.75px;line-height:5.75px;color:#505050;white-space:nowrap;left:907.95px;transform-origin:0 0;transform: translateX(-50%);">2015/01/08</div>
<div style="position:absolute;top:264px;font-size:5.75px;line-height:5.75px;color:#505050;white-space:nowrap;left:23.15px;transform-origin:0 0;transform: translateX(-50%);">122</div>
<div style="position:absolute;top:264px;font-size:5.75px;line-height:5.75px;color:#505050;white-space:nowrap;left:39.75px;transform-origin:0 0;">C 007 - COM Hydraulic System</div>
<div style="position:absolute;top:264px;font-size:5.75px;line-height:5.75px;color:#505050;white-space:nowrap;left:261.00px;transform-origin:0 0;">IJM 001 - IJM Hydraulic System light</div>
<svg style="position:absolute;left:596.90px;top:263.20px" width="5" height="5" viewBox="0 0 10 10"><path d="M0 2.6 L2.6 0 L5 2.4 L7.4 0 L10 2.6 L7.6 5 L10 7.4 L7.4 10 L5 7.6 L2.6 10 L0 7.4 L2.4 5 Z" fill="#e05a14"/></svg>
<div style="position:absolute;top:264px;font-size:5.75px;line-height:5.75px;color:#505050;white-space:nowrap;left:604.10px;transform-origin:0 0;">Every 2 weeks</div>
<div style="position:absolute;top:264px;font-size:5.75px;line-height:5.75px;color:#505050;white-space:nowrap;left:761.12px;transform-origin:0 0;transform: translateX(-50%);">yes</div>
<svg style="position:absolute;left:788.10px;top:261.90px" width="6.3" height="6.3" viewBox="0 0 16 16"><path fill="#333" fill-rule="evenodd" d="M13.64 6.65 L15.92 6.87 L15.92 9.13 L13.64 9.35 L12.95 11.03 L14.40 12.80 L12.80 14.40 L11.03 12.95 L9.35 13.64 L9.13 15.92 L6.87 15.92 L6.65 13.64 L4.97 12.95 L3.20 14.40 L1.60 12.80 L3.05 11.03 L2.36 9.35 L0.08 9.13 L0.08 6.87 L2.36 6.65 L3.05 4.97 L1.60 3.20 L3.20 1.60 L4.97 3.05 L6.65 2.36 L6.87 0.08 L9.13 0.08 L9.35 2.36 L11.03 3.05 L12.80 1.60 L14.40 3.20 L12.95 4.97Z "/><circle cx="8" cy="8" r="2.9" fill="#c0c0c0"/></svg>
<div style="position:absolute;top:264px;font-size:5.75px;line-height:5.75px;color:#5f9bc8;white-space:nowrap;left:799.00px;transform-origin:0 0;">Update</div>
<div style="position:absolute;top:264px;font-size:5.75px;line-height:5.75px;color:#505050;white-space:nowrap;left:907.95px;transform-origin:0 0;transform: translateX(-50%);">2014/12/17</div>
<div style="position:absolute;top:278px;font-size:5.75px;line-height:5.75px;color:#505050;white-space:nowrap;left:23.15px;transform-origin:0 0;transform: translateX(-50%);">126</div>
<div style="position:absolute;top:278px;font-size:5.75px;line-height:5.75px;color:#505050;white-space:nowrap;left:39.75px;transform-origin:0 0;">C 010 - COM Moving Part</div>
<div style="position:absolute;top:278px;font-size:5.75px;line-height:5.75px;color:#505050;white-space:nowrap;left:261.00px;transform-origin:0 0;">IJM 008 - IJM Clamp movement</div>
<svg style="position:absolute;left:596.90px;top:278.20px" width="5" height="5" viewBox="0 0 10 10"><path d="M0 2.6 L2.6 0 L5 2.4 L7.4 0 L10 2.6 L7.6 5 L10 7.4 L7.4 10 L5 7.6 L2.6 10 L0 7.4 L2.4 5 Z" fill="#e05a14"/></svg>
<div style="position:absolute;top:278px;font-size:5.75px;line-height:5.75px;color:#505050;white-space:nowrap;left:604.10px;transform-origin:0 0;">Every 2 weeks</div>
<div style="position:absolute;top:278px;font-size:5.75px;line-height:5.75px;color:#505050;white-space:nowrap;left:761.12px;transform-origin:0 0;transform: translateX(-50%);">yes</div>
<svg style="position:absolute;left:788.10px;top:276.90px" width="6.3" height="6.3" viewBox="0 0 16 16"><path fill="#333" fill-rule="evenodd" d="M13.64 6.65 L15.92 6.87 L15.92 9.13 L13.64 9.35 L12.95 11.03 L14.40 12.80 L12.80 14.40 L11.03 12.95 L9.35 13.64 L9.13 15.92 L6.87 15.92 L6.65 13.64 L4.97 12.95 L3.20 14.40 L1.60 12.80 L3.05 11.03 L2.36 9.35 L0.08 9.13 L0.08 6.87 L2.36 6.65 L3.05 4.97 L1.60 3.20 L3.20 1.60 L4.97 3.05 L6.65 2.36 L6.87 0.08 L9.13 0.08 L9.35 2.36 L11.03 3.05 L12.80 1.60 L14.40 3.20 L12.95 4.97Z "/><circle cx="8" cy="8" r="2.9" fill="#c0c0c0"/></svg>
<div style="position:absolute;top:278px;font-size:5.75px;line-height:5.75px;color:#5f9bc8;white-space:nowrap;left:799.00px;transform-origin:0 0;">Update</div>
<div style="position:absolute;top:278px;font-size:5.75px;line-height:5.75px;color:#505050;white-space:nowrap;left:907.95px;transform-origin:0 0;transform: translateX(-50%);">2014/12/17</div>
<div style="position:absolute;top:292px;font-size:5.75px;line-height:5.75px;color:#505050;white-space:nowrap;left:23.15px;transform-origin:0 0;transform: translateX(-50%);">139</div>
<div style="position:absolute;top:292px;font-size:5.75px;line-height:5.75px;color:#505050;white-space:nowrap;left:39.75px;transform-origin:0 0;">C 010 - COM Moving Part</div>
<div style="position:absolute;top:292px;font-size:5.75px;line-height:5.75px;color:#505050;white-space:nowrap;left:261.00px;transform-origin:0 0;">IJM 014 - Moving Part Service</div>
<svg style="position:absolute;left:462.30px;top:292.20px" width="5" height="5" viewBox="0 0 10 10"><path d="M0 2.6 L2.6 0 L5 2.4 L7.4 0 L10 2.6 L7.6 5 L10 7.4 L7.4 10 L5 7.6 L2.6 10 L0 7.4 L2.4 5 Z" fill="#e05a14"/></svg>
<div style="position:absolute;top:292px;font-size:5.75px;line-height:5.75px;color:#505050;white-space:nowrap;left:471.10px;transform-origin:0 0;">Every 10000 Cycles</div>
<div style="position:absolute;top:292px;font-size:5.75px;line-height:5.75px;color:#505050;white-space:nowrap;left:761.12px;transform-origin:0 0;transform: translateX(-50%);">yes</div>
<svg style="position:absolute;left:788.10px;top:290.90px" width="6.3" height="6.3" viewBox="0 0 16 16"><path fill="#333" fill-rule="evenodd" d="M13.64 6.65 L15.92 6.87 L15.92 9.13 L13.64 9.35 L12.95 11.03 L14.40 12.80 L12.80 14.40 L11.03 12.95 L9.35 13.64 L9.13 15.92 L6.87 15.92 L6.65 13.64 L4.97 12.95 L3.20 14.40 L1.60 12.80 L3.05 11.03 L2.36 9.35 L0.08 9.13 L0.08 6.87 L2.36 6.65 L3.05 4.97 L1.60 3.20 L3.20 1.60 L4.97 3.05 L6.65 2.36 L6.87 0.08 L9.13 0.08 L9.35 2.36 L11.03 3.05 L12.80 1.60 L14.40 3.20 L12.95 4.97Z "/><circle cx="8" cy="8" r="2.9" fill="#c0c0c0"/></svg>
<div style="position:absolute;top:292px;font-size:5.75px;line-height:5.75px;color:#5f9bc8;white-space:nowrap;left:799.00px;transform-origin:0 0;">Update</div>
<div style="position:absolute;top:292px;font-size:5.75px;line-height:5.75px;color:#505050;white-space:nowrap;left:907.95px;transform-origin:0 0;transform: translateX(-50%);">2015/01/08</div>
<div style="position:absolute;top:306px;font-size:5.75px;line-height:5.75px;color:#505050;white-space:nowrap;left:23.15px;transform-origin:0 0;transform: translateX(-50%);">123</div>
<div style="position:absolute;top:306px;font-size:5.75px;line-height:5.75px;color:#505050;white-space:nowrap;left:39.75px;transform-origin:0 0;">C 008 - COM Screw</div>
<div style="position:absolute;top:306px;font-size:5.75px;line-height:5.75px;color:#505050;white-space:nowrap;left:261.00px;transform-origin:0 0;">IJM 006 - IJM Screw Maintenance</div>
<svg style="position:absolute;left:596.90px;top:306.20px" width="5" height="5" viewBox="0 0 10 10"><path d="M0 2.6 L2.6 0 L5 2.4 L7.4 0 L10 2.6 L7.6 5 L10 7.4 L7.4 10 L5 7.6 L2.6 10 L0 7.4 L2.4 5 Z" fill="#e05a14"/></svg>
<div style="position:absolute;top:306px;font-size:5.75px;line-height:5.75px;color:#505050;white-space:nowrap;left:604.10px;transform-origin:0 0;">Every 2 weeks</div>
<div style="position:absolute;top:306px;font-size:5.75px;line-height:5.75px;color:#505050;white-space:nowrap;left:761.12px;transform-origin:0 0;transform: translateX(-50%);">yes</div>
<svg style="position:absolute;left:788.10px;top:304.90px" width="6.3" height="6.3" viewBox="0 0 16 16"><path fill="#333" fill-rule="evenodd" d="M13.64 6.65 L15.92 6.87 L15.92 9.13 L13.64 9.35 L12.95 11.03 L14.40 12.80 L12.80 14.40 L11.03 12.95 L9.35 13.64 L9.13 15.92 L6.87 15.92 L6.65 13.64 L4.97 12.95 L3.20 14.40 L1.60 12.80 L3.05 11.03 L2.36 9.35 L0.08 9.13 L0.08 6.87 L2.36 6.65 L3.05 4.97 L1.60 3.20 L3.20 1.60 L4.97 3.05 L6.65 2.36 L6.87 0.08 L9.13 0.08 L9.35 2.36 L11.03 3.05 L12.80 1.60 L14.40 3.20 L12.95 4.97Z "/><circle cx="8" cy="8" r="2.9" fill="#c0c0c0"/></svg>
<div style="position:absolute;top:306px;font-size:5.75px;line-height:5.75px;color:#5f9bc8;white-space:nowrap;left:799.00px;transform-origin:0 0;">Update</div>
<div style="position:absolute;top:306px;font-size:5.75px;line-height:5.75px;color:#505050;white-space:nowrap;left:907.95px;transform-origin:0 0;transform: translateX(-50%);">2014/12/17</div>
<div style="position:absolute;top:320px;font-size:5.75px;line-height:5.75px;color:#505050;white-space:nowrap;left:23.15px;transform-origin:0 0;transform: translateX(-50%);">141</div>
<div style="position:absolute;top:320px;font-size:5.75px;line-height:5.75px;color:#505050;white-space:nowrap;left:39.75px;transform-origin:0 0;">C 008 - COM Screw</div>
<div style="position:absolute;top:320px;font-size:5.75px;line-height:5.75px;color:#505050;white-space:nowrap;left:261.00px;transform-origin:0 0;">IJM 010 - Screw Service</div>
<svg style="position:absolute;left:462.30px;top:320.20px" width="5" height="5" viewBox="0 0 10 10"><path d="M0 2.6 L2.6 0 L5 2.4 L7.4 0 L10 2.6 L7.6 5 L10 7.4 L7.4 10 L5 7.6 L2.6 10 L0 7.4 L2.4 5 Z" fill="#e05a14"/></svg>
<div style="position:absolute;top:320px;font-size:5.75px;line-height:5.75px;color:#505050;white-space:nowrap;left:471.10px;transform-origin:0 0;">Every 10000 Cycles</div>
<div style="position:absolute;top:320px;font-size:5.75px;line-height:5.75px;color:#505050;white-space:nowrap;left:761.12px;transform-origin:0 0;transform: translateX(-50%);">yes</div>
<svg style="position:absolute;left:788.10px;top:318.90px" width="6.3" height="6.3" viewBox="0 0 16 16"><path fill="#333" fill-rule="evenodd" d="M13.64 6.65 L15.92 6.87 L15.92 9.13 L13.64 9.35 L12.95 11.03 L14.40 12.80 L12.80 14.40 L11.03 12.95 L9.35 13.64 L9.13 15.92 L6.87 15.92 L6.65 13.64 L4.97 12.95 L3.20 14.40 L1.60 12.80 L3.05 11.03 L2.36 9.35 L0.08 9.13 L0.08 6.87 L2.36 6.65 L3.05 4.97 L1.60 3.20 L3.20 1.60 L4.97 3.05 L6.65 2.36 L6.87 0.08 L9.13 0.08 L9.35 2.36 L11.03 3.05 L12.80 1.60 L14.40 3.20 L12.95 4.97Z "/><circle cx="8" cy="8" r="2.9" fill="#c0c0c0"/></svg>
<div style="position:absolute;top:320px;font-size:5.75px;line-height:5.75px;color:#5f9bc8;white-space:nowrap;left:799.00px;transform-origin:0 0;">Update</div>
<div style="position:absolute;top:320px;font-size:5.75px;line-height:5.75px;color:#505050;white-space:nowrap;left:907.95px;transform-origin:0 0;transform: translateX(-50%);">2015/01/08</div>
<div style="position:absolute;top:334px;font-size:5.75px;line-height:5.75px;color:#505050;white-space:nowrap;left:11.25px;transform-origin:0 0;"><b style="color:#3c3c3c">Policy Group [ Devices ]:</b> C 002 - COM Stores Maintenance</div>
<div style="position:absolute;top:346px;font-size:5.75px;line-height:5.75px;color:#505050;white-space:nowrap;left:23.15px;transform-origin:0 0;transform: translateX(-50%);">90</div>
<div style="position:absolute;top:346px;font-size:5.75px;line-height:5.75px;color:#505050;white-space:nowrap;left:39.75px;transform-origin:0 0;">C 002 - COM Conveyor network</div>
<div style="position:absolute;top:346px;font-size:5.75px;line-height:5.75px;color:#505050;white-space:nowrap;left:261.00px;transform-origin:0 0;">M 006 - Cleaning</div>
<svg style="position:absolute;left:596.90px;top:346.20px" width="5" height="5" viewBox="0 0 10 10"><path d="M0 2.6 L2.6 0 L5 2.4 L7.4 0 L10 2.6 L7.6 5 L10 7.4 L7.4 10 L5 7.6 L2.6 10 L0 7.4 L2.4 5 Z" fill="#e05a14"/></svg>
<div style="position:absolute;top:346px;font-size:5.75px;line-height:5.75px;color:#505050;white-space:nowrap;left:604.10px;transform-origin:0 0;">Weekly every Friday</div>
<div style="position:absolute;top:346px;font-size:5.75px;line-height:5.75px;color:#505050;white-space:nowrap;left:761.12px;transform-origin:0 0;transform: translateX(-50%);">yes</div>
<svg style="position:absolute;left:788.10px;top:344.90px" width="6.3" height="6.3" viewBox="0 0 16 16"><path fill="#333" fill-rule="evenodd" d="M13.64 6.65 L15.92 6.87 L15.92 9.13 L13.64 9.35 L12.95 11.03 L14.40 12.80 L12.80 14.40 L11.03 12.95 L9.35 13.64 L9.13 15.92 L6.87 15.92 L6.65 13.64 L4.97 12.95 L3.20 14.40 L1.60 12.80 L3.05 11.03 L2.36 9.35 L0.08 9.13 L0.08 6.87 L2.36 6.65 L3.05 4.97 L1.60 3.20 L3.20 1.60 L4.97 3.05 L6.65 2.36 L6.87 0.08 L9.13 0.08 L9.35 2.36 L11.03 3.05 L12.80 1.60 L14.40 3.20 L12.95 4.97Z "/><circle cx="8" cy="8" r="2.9" fill="#c0c0c0"/></svg>
<div style="position:absolute;top:346px;font-size:5.75px;line-height:5.75px;color:#5f9bc8;white-space:nowrap;left:799.00px;transform-origin:0 0;">Update</div>
<div style="position:absolute;top:346px;font-size:5.75px;line-height:5.75px;color:#505050;white-space:nowrap;left:907.95px;transform-origin:0 0;transform: translateX(-50%);">2014/11/17</div>
<div style="position:absolute;top:360px;font-size:5.75px;line-height:5.75px;color:#505050;white-space:nowrap;left:23.15px;transform-origin:0 0;transform: translateX(-50%);">92</div>
<div style="position:absolute;top:360px;font-size:5.75px;line-height:5.75px;color:#505050;white-space:nowrap;left:39.75px;transform-origin:0 0;">C 002 - COM Conveyor network</div>
<div style="position:absolute;top:360px;font-size:5.75px;line-height:5.75px;color:#505050;white-space:nowrap;left:261.00px;transform-origin:0 0;">M 002 - Inspection</div>
<svg style="position:absolute;left:596.90px;top:360.20px" width="5" height="5" viewBox="0 0 10 10"><path d="M0 2.6 L2.6 0 L5 2.4 L7.4 0 L10 2.6 L7.6 5 L10 7.4 L7.4 10 L5 7.6 L2.6 10 L0 7.4 L2.4 5 Z" fill="#e05a14"/></svg>
<div style="position:absolute;top:360px;font-size:5.75px;line-height:5.75px;color:#505050;white-space:nowrap;left:604.10px;transform-origin:0 0;">Every 2 weeks</div>
<div style="position:absolute;top:360px;font-size:5.75px;line-height:5.75px;color:#505050;white-space:nowrap;left:761.12px;transform-origin:0 0;transform: translateX(-50%);">yes</div>
<svg style="position:absolute;left:788.10px;top:358.90px" width="6.3" height="6.3" viewBox="0 0 16 16"><path fill="#333" fill-rule="evenodd" d="M13.64 6.65 L15.92 6.87 L15.92 9.13 L13.64 9.35 L12.95 11.03 L14.40 12.80 L12.80 14.40 L11.03 12.95 L9.35 13.64 L9.13 15.92 L6.87 15.92 L6.65 13.64 L4.97 12.95 L3.20 14.40 L1.60 12.80 L3.05 11.03 L2.36 9.35 L0.08 9.13 L0.08 6.87 L2.36 6.65 L3.05 4.97 L1.60 3.20 L3.20 1.60 L4.97 3.05 L6.65 2.36 L6.87 0.08 L9.13 0.08 L9.35 2.36 L11.03 3.05 L12.80 1.60 L14.40 3.20 L12.95 4.97Z "/><circle cx="8" cy="8" r="2.9" fill="#c0c0c0"/></svg>
<div style="position:absolute;top:360px;font-size:5.75px;line-height:5.75px;color:#5f9bc8;white-space:nowrap;left:799.00px;transform-origin:0 0;">Update</div>
<div style="position:absolute;top:360px;font-size:5.75px;line-height:5.75px;color:#505050;white-space:nowrap;left:907.95px;transform-origin:0 0;transform: translateX(-50%);">2014/11/17</div>
<div style="position:absolute;top:374px;font-size:5.75px;line-height:5.75px;color:#505050;white-space:nowrap;left:23.15px;transform-origin:0 0;transform: translateX(-50%);">91</div>
<div style="position:absolute;top:374px;font-size:5.75px;line-height:5.75px;color:#505050;white-space:nowrap;left:39.75px;transform-origin:0 0;">C 002 - COM Conveyor network</div>
<div style="position:absolute;top:374px;font-size:5.75px;line-height:5.75px;color:#505050;white-space:nowrap;left:261.00px;transform-origin:0 0;">M 001 - Lubrication</div>
<svg style="position:absolute;left:596.90px;top:374.20px" width="5" height="5" viewBox="0 0 10 10"><path d="M0 2.6 L2.6 0 L5 2.4 L7.4 0 L10 2.6 L7.6 5 L10 7.4 L7.4 10 L5 7.6 L2.6 10 L0 7.4 L2.4 5 Z" fill="#e05a14"/></svg>
<div style="position:absolute;top:374px;font-size:5.75px;line-height:5.75px;color:#505050;white-space:nowrap;left:604.10px;transform-origin:0 0;">Every 2 weeks</div>
<div style="position:absolute;top:374px;font-size:5.75px;line-height:5.75px;color:#505050;white-space:nowrap;left:761.12px;transform-origin:0 0;transform: translateX(-50%);">yes</div>
<svg style="position:absolute;left:788.10px;top:372.90px" width="6.3" height="6.3" viewBox="0 0 16 16"><path fill="#333" fill-rule="evenodd" d="M13.64 6.65 L15.92 6.87 L15.92 9.13 L13.64 9.35 L12.95 11.03 L14.40 12.80 L12.80 14.40 L11.03 12.95 L9.35 13.64 L9.13 15.92 L6.87 15.92 L6.65 13.64 L4.97 12.95 L3.20 14.40 L1.60 12.80 L3.05 11.03 L2.36 9.35 L0.08 9.13 L0.08 6.87 L2.36 6.65 L3.05 4.97 L1.60 3.20 L3.20 1.60 L4.97 3.05 L6.65 2.36 L6.87 0.08 L9.13 0.08 L9.35 2.36 L11.03 3.05 L12.80 1.60 L14.40 3.20 L12.95 4.97Z "/><circle cx="8" cy="8" r="2.9" fill="#c0c0c0"/></svg>
<div style="position:absolute;top:374px;font-size:5.75px;line-height:5.75px;color:#5f9bc8;white-space:nowrap;left:799.00px;transform-origin:0 0;">Update</div>
<div style="position:absolute;top:374px;font-size:5.75px;line-height:5.75px;color:#505050;white-space:nowrap;left:907.95px;transform-origin:0 0;transform: translateX(-50%);">2014/11/17</div>
<div style="position:absolute;top:388px;font-size:5.75px;line-height:5.75px;color:#505050;white-space:nowrap;left:23.15px;transform-origin:0 0;transform: translateX(-50%);">93</div>
<div style="position:absolute;top:388px;font-size:5.75px;line-height:5.75px;color:#505050;white-space:nowrap;left:39.75px;transform-origin:0 0;">C 002 - COM Conveyor network</div>
<div style="position:absolute;top:388px;font-size:5.75px;line-height:5.75px;color:#505050;white-space:nowrap;left:261.00px;transform-origin:0 0;">M 003 - Minor Service</div>
<svg style="position:absolute;left:596.90px;top:388.20px" width="5" height="5" viewBox="0 0 10 10"><path d="M0 2.6 L2.6 0 L5 2.4 L7.4 0 L10 2.6 L7.6 5 L10 7.4 L7.4 10 L5 7.6 L2.6 10 L0 7.4 L2.4 5 Z" fill="#e05a14"/></svg>
<div style="position:absolute;top:388px;font-size:5.75px;line-height:5.75px;color:#505050;white-space:nowrap;left:604.10px;transform-origin:0 0;">Every 6 months</div>
<div style="position:absolute;top:388px;font-size:5.75px;line-height:5.75px;color:#505050;white-space:nowrap;left:761.12px;transform-origin:0 0;transform: translateX(-50%);">yes</div>
<svg style="position:absolute;left:788.10px;top:386.90px" width="6.3" height="6.3" viewBox="0 0 16 16"><path fill="#333" fill-rule="evenodd" d="M13.64 6.65 L15.92 6.87 L15.92 9.13 L13.64 9.35 L12.95 11.03 L14.40 12.80 L12.80 14.40 L11.03 12.95 L9.35 13.64 L9.13 15.92 L6.87 15.92 L6.65 13.64 L4.97 12.95 L3.20 14.40 L1.60 12.80 L3.05 11.03 L2.36 9.35 L0.08 9.13 L0.08 6.87 L2.36 6.65 L3.05 4.97 L1.60 3.20 L3.20 1.60 L4.97 3.05 L6.65 2.36 L6.87 0.08 L9.13 0.08 L9.35 2.36 L11.03 3.05 L12.80 1.60 L14.40 3.20 L12.95 4.97Z "/><circle cx="8" cy="8" r="2.9" fill="#c0c0c0"/></svg>
<div style="position:absolute;top:388px;font-size:5.75px;line-height:5.75px;color:#5f9bc8;white-space:nowrap;left:799.00px;transform-origin:0 0;">Update</div>
<div style="position:absolute;top:388px;font-size:5.75px;line-height:5.75px;color:#505050;white-space:nowrap;left:907.95px;transform-origin:0 0;transform: translateX(-50%);">2014/11/17</div>
<div style="position:absolute;top:402px;font-size:5.75px;line-height:5.75px;color:#505050;white-space:nowrap;left:23.15px;transform-origin:0 0;transform: translateX(-50%);">96</div>
<div style="position:absolute;top:402px;font-size:5.75px;line-height:5.75px;color:#505050;white-space:nowrap;left:39.75px;transform-origin:0 0;">C 002 - COM Conveyor network</div>
<div style="position:absolute;top:402px;font-size:5.75px;line-height:5.75px;color:#505050;white-space:nowrap;left:261.00px;transform-origin:0 0;">M 004 - Service</div>
<svg style="position:absolute;left:596.90px;top:402.20px" width="5" height="5" viewBox="0 0 10 10"><path d="M0 2.6 L2.6 0 L5 2.4 L7.4 0 L10 2.6 L7.6 5 L10 7.4 L7.4 10 L5 7.6 L2.6 10 L0 7.4 L2.4 5 Z" fill="#e05a14"/></svg>
<div style="position:absolute;top:402px;font-size:5.75px;line-height:5.75px;color:#505050;white-space:nowrap;left:604.10px;transform-origin:0 0;">Every 4000 hours</div>
<div style="position:absolute;top:402px;font-size:5.75px;line-height:5.75px;color:#505050;white-space:nowrap;left:761.12px;transform-origin:0 0;transform: translateX(-50%);">yes</div>
<svg style="position:absolute;left:788.10px;top:400.90px" width="6.3" height="6.3" viewBox="0 0 16 16"><path fill="#333" fill-rule="evenodd" d="M13.64 6.65 L15.92 6.87 L15.92 9.13 L13.64 9.35 L12.95 11.03 L14.40 12.80 L12.80 14.40 L11.03 12.95 L9.35 13.64 L9.13 15.92 L6.87 15.92 L6.65 13.64 L4.97 12.95 L3.20 14.40 L1.60 12.80 L3.05 11.03 L2.36 9.35 L0.08 9.13 L0.08 6.87 L2.36 6.65 L3.05 4.97 L1.60 3.20 L3.20 1.60 L4.97 3.05 L6.65 2.36 L6.87 0.08 L9.13 0.08 L9.35 2.36 L11.03 3.05 L12.80 1.60 L14.40 3.20 L12.95 4.97Z "/><circle cx="8" cy="8" r="2.9" fill="#c0c0c0"/></svg>
<div style="position:absolute;top:402px;font-size:5.75px;line-height:5.75px;color:#5f9bc8;white-space:nowrap;left:799.00px;transform-origin:0 0;">Update</div>
<div style="position:absolute;top:402px;font-size:5.75px;line-height:5.75px;color:#505050;white-space:nowrap;left:907.95px;transform-origin:0 0;transform: translateX(-50%);">2014/11/17</div>
<div style="position:absolute;top:416px;font-size:5.75px;line-height:5.75px;color:#505050;white-space:nowrap;left:23.15px;transform-origin:0 0;transform: translateX(-50%);">83</div>
<div style="position:absolute;top:416px;font-size:5.75px;line-height:5.75px;color:#505050;white-space:nowrap;left:39.75px;transform-origin:0 0;">C 001 - COM Vehicles</div>
<div style="position:absolute;top:416px;font-size:5.75px;line-height:5.75px;color:#505050;white-space:nowrap;left:261.00px;transform-origin:0 0;">M 006 - Cleaning</div>
<svg style="position:absolute;left:596.90px;top:416.20px" width="5" height="5" viewBox="0 0 10 10"><path d="M0 2.6 L2.6 0 L5 2.4 L7.4 0 L10 2.6 L7.6 5 L10 7.4 L7.4 10 L5 7.6 L2.6 10 L0 7.4 L2.4 5 Z" fill="#e05a14"/></svg>
<div style="position:absolute;top:416px;font-size:5.75px;line-height:5.75px;color:#505050;white-space:nowrap;left:604.10px;transform-origin:0 0;">Weekly every Saturday</div>
<div style="position:absolute;top:416px;font-size:5.75px;line-height:5.75px;color:#505050;white-space:nowrap;left:761.12px;transform-origin:0 0;transform: translateX(-50%);">yes</div>
<svg style="position:absolute;left:788.10px;top:414.90px" width="6.3" height="6.3" viewBox="0 0 16 16"><path fill="#333" fill-rule="evenodd" d="M13.64 6.65 L15.92 6.87 L15.92 9.13 L13.64 9.35 L12.95 11.03 L14.40 12.80 L12.80 14.40 L11.03 12.95 L9.35 13.64 L9.13 15.92 L6.87 15.92 L6.65 13.64 L4.97 12.95 L3.20 14.40 L1.60 12.80 L3.05 11.03 L2.36 9.35 L0.08 9.13 L0.08 6.87 L2.36 6.65 L3.05 4.97 L1.60 3.20 L3.20 1.60 L4.97 3.05 L6.65 2.36 L6.87 0.08 L9.13 0.08 L9.35 2.36 L11.03 3.05 L12.80 1.60 L14.40 3.20 L12.95 4.97Z "/><circle cx="8" cy="8" r="2.9" fill="#c0c0c0"/></svg>
<div style="position:absolute;top:416px;font-size:5.75px;line-height:5.75px;color:#5f9bc8;white-space:nowrap;left:799.00px;transform-origin:0 0;">Update</div>
<div style="position:absolute;top:416px;font-size:5.75px;line-height:5.75px;color:#505050;white-space:nowrap;left:907.95px;transform-origin:0 0;transform: translateX(-50%);">2014/11/17</div>
<div style="position:absolute;top:430px;font-size:5.75px;line-height:5.75px;color:#505050;white-space:nowrap;left:23.15px;transform-origin:0 0;transform: translateX(-50%);">85</div>
<div style="position:absolute;top:430px;font-size:5.75px;line-height:5.75px;color:#505050;white-space:nowrap;left:39.75px;transform-origin:0 0;">C 001 - COM Vehicles</div>
<div style="position:absolute;top:430px;font-size:5.75px;line-height:5.75px;color:#505050;white-space:nowrap;left:261.00px;transform-origin:0 0;">M 010 - Drain Fluids</div>
<svg style="position:absolute;left:596.90px;top:430.20px" width="5" height="5" viewBox="0 0 10 10"><path d="M0 2.6 L2.6 0 L5 2.4 L7.4 0 L10 2.6 L7.6 5 L10 7.4 L7.4 10 L5 7.6 L2.6 10 L0 7.4 L2.4 5 Z" fill="#e05a14"/></svg>
<div style="position:absolute;top:430px;font-size:5.75px;line-height:5.75px;color:#505050;white-space:nowrap;left:604.10px;transform-origin:0 0;">Every 6 months</div>
<div style="position:absolute;top:430px;font-size:5.75px;line-height:5.75px;color:#505050;white-space:nowrap;left:761.12px;transform-origin:0 0;transform: translateX(-50%);">yes</div>
<svg style="position:absolute;left:788.10px;top:428.90px" width="6.3" height="6.3" viewBox="0 0 16 16"><path fill="#333" fill-rule="evenodd" d="M13.64 6.65 L15.92 6.87 L15.92 9.13 L13.64 9.35 L12.95 11.03 L14.40 12.80 L12.80 14.40 L11.03 12.95 L9.35 13.64 L9.13 15.92 L6.87 15.92 L6.65 13.64 L4.97 12.95 L3.20 14.40 L1.60 12.80 L3.05 11.03 L2.36 9.35 L0.08 9.13 L0.08 6.87 L2.36 6.65 L3.05 4.97 L1.60 3.20 L3.20 1.60 L4.97 3.05 L6.65 2.36 L6.87 0.08 L9.13 0.08 L9.35 2.36 L11.03 3.05 L12.80 1.60 L14.40 3.20 L12.95 4.97Z "/><circle cx="8" cy="8" r="2.9" fill="#c0c0c0"/></svg>
<div style="position:absolute;top:430px;font-size:5.75px;line-height:5.75px;color:#5f9bc8;white-space:nowrap;left:799.00px;transform-origin:0 0;">Update</div>
<div style="position:absolute;top:430px;font-size:5.75px;line-height:5.75px;color:#505050;white-space:nowrap;left:907.95px;transform-origin:0 0;transform: translateX(-50%);">2014/11/17</div>
<div style="position:absolute;top:444px;font-size:5.75px;line-height:5.75px;color:#505050;white-space:nowrap;left:23.15px;transform-origin:0 0;transform: translateX(-50%);">86</div>
<div style="position:absolute;top:444px;font-size:5.75px;line-height:5.75px;color:#505050;white-space:nowrap;left:39.75px;transform-origin:0 0;">C 001 - COM Vehicles</div>
<div style="position:absolute;top:444px;font-size:5.75px;line-height:5.75px;color:#505050;white-space:nowrap;left:261.00px;transform-origin:0 0;">M 002 - Inspection</div>
<svg style="position:absolute;left:596.90px;top:444.20px" width="5" height="5" viewBox="0 0 10 10"><path d="M0 2.6 L2.6 0 L5 2.4 L7.4 0 L10 2.6 L7.6 5 L10 7.4 L7.4 10 L5 7.6 L2.6 10 L0 7.4 L2.4 5 Z" fill="#e05a14"/></svg>
<div style="position:absolute;top:444px;font-size:5.75px;line-height:5.75px;color:#505050;white-space:nowrap;left:604.10px;transform-origin:0 0;">Every 6 months</div>
<div style="position:absolute;top:444px;font-size:5.75px;line-height:5.75px;color:#505050;white-space:nowrap;left:761.12px;transform-origin:0 0;transform: translateX(-50%);">yes</div>
<svg style="position:absolute;left:788.10px;top:442.90px" width="6.3" height="6.3" viewBox="0 0 16 16"><path fill="#333" fill-rule="evenodd" d="M13.64 6.65 L15.92 6.87 L15.92 9.13 L13.64 9.35 L12.95 11.03 L14.40 12.80 L12.80 14.40 L11.03 12.95 L9.35 13.64 L9.13 15.92 L6.87 15.92 L6.65 13.64 L4.97 12.95 L3.20 14.40 L1.60 12.80 L3.05 11.03 L2.36 9.35 L0.08 9.13 L0.08 6.87 L2.36 6.65 L3.05 4.97 L1.60 3.20 L3.20 1.60 L4.97 3.05 L6.65 2.36 L6.87 0.08 L9.13 0.08 L9.35 2.36 L11.03 3.05 L12.80 1.60 L14.40 3.20 L12.95 4.97Z "/><circle cx="8" cy="8" r="2.9" fill="#c0c0c0"/></svg>
<div style="position:absolute;top:444px;font-size:5.75px;line-height:5.75px;color:#5f9bc8;white-space:nowrap;left:799.00px;transform-origin:0 0;">Update</div>
<div style="position:absolute;top:444px;font-size:5.75px;line-height:5.75px;color:#505050;white-space:nowrap;left:907.95px;transform-origin:0 0;transform: translateX(-50%);">2014/11/17</div>
<div style="position:absolute;top:458px;font-size:5.75px;line-height:5.75px;color:#505050;white-space:nowrap;left:23.15px;transform-origin:0 0;transform: translateX(-50%);">89</div>
<div style="position:absolute;top:458px;font-size:5.75px;line-height:5.75px;color:#505050;white-space:nowrap;left:39.75px;transform-origin:0 0;">C 001 - COM Vehicles</div>
<div style="position:absolute;top:458px;font-size:5.75px;line-height:5.75px;color:#505050;white-space:nowrap;left:261.00px;transform-origin:0 0;">M 007 - Record Meter</div>
<svg style="position:absolute;left:596.90px;top:458.20px" width="5" height="5" viewBox="0 0 10 10"><path d="M0 2.6 L2.6 0 L5 2.4 L7.4 0 L10 2.6 L7.6 5 L10 7.4 L7.4 10 L5 7.6 L2.6 10 L0 7.4 L2.4 5 Z" fill="#e05a14"/></svg>
<div style="position:absolute;top:458px;font-size:5.75px;line-height:5.75px;color:#505050;white-space:nowrap;left:604.10px;transform-origin:0 0;">Weekly every Friday</div>
<div style="position:absolute;top:458px;font-size:5.75px;line-height:5.75px;color:#505050;white-space:nowrap;left:761.12px;transform-origin:0 0;transform: translateX(-50%);">yes</div>
<svg style="position:absolute;left:788.10px;top:456.90px" width="6.3" height="6.3" viewBox="0 0 16 16"><path fill="#333" fill-rule="evenodd" d="M13.64 6.65 L15.92 6.87 L15.92 9.13 L13.64 9.35 L12.95 11.03 L14.40 12.80 L12.80 14.40 L11.03 12.95 L9.35 13.64 L9.13 15.92 L6.87 15.92 L6.65 13.64 L4.97 12.95 L3.20 14.40 L1.60 12.80 L3.05 11.03 L2.36 9.35 L0.08 9.13 L0.08 6.87 L2.36 6.65 L3.05 4.97 L1.60 3.20 L3.20 1.60 L4.97 3.05 L6.65 2.36 L6.87 0.08 L9.13 0.08 L9.35 2.36 L11.03 3.05 L12.80 1.60 L14.40 3.20 L12.95 4.97Z "/><circle cx="8" cy="8" r="2.9" fill="#c0c0c0"/></svg>
<div style="position:absolute;top:458px;font-size:5.75px;line-height:5.75px;color:#5f9bc8;white-space:nowrap;left:799.00px;transform-origin:0 0;">Update</div>
<div style="position:absolute;top:458px;font-size:5.75px;line-height:5.75px;color:#505050;white-space:nowrap;left:907.95px;transform-origin:0 0;transform: translateX(-50%);">2014/11/17</div>
<div style="position:absolute;top:472px;font-size:5.75px;line-height:5.75px;color:#505050;white-space:nowrap;left:23.15px;transform-origin:0 0;transform: translateX(-50%);">84</div>
<div style="position:absolute;top:472px;font-size:5.75px;line-height:5.75px;color:#505050;white-space:nowrap;left:39.75px;transform-origin:0 0;">C 001 - COM Vehicles</div>
<div style="position:absolute;top:472px;font-size:5.75px;line-height:5.75px;color:#505050;white-space:nowrap;left:261.00px;transform-origin:0 0;">M 008 - Refill Fluids</div>
<svg style="position:absolute;left:596.90px;top:472.20px" width="5" height="5" viewBox="0 0 10 10"><path d="M0 2.6 L2.6 0 L5 2.4 L7.4 0 L10 2.6 L7.6 5 L10 7.4 L7.4 10 L5 7.6 L2.6 10 L0 7.4 L2.4 5 Z" fill="#e05a14"/></svg>
<div style="position:absolute;top:472px;font-size:5.75px;line-height:5.75px;color:#505050;white-space:nowrap;left:604.10px;transform-origin:0 0;">Every 2 weeks</div>
<div style="position:absolute;top:472px;font-size:5.75px;line-height:5.75px;color:#505050;white-space:nowrap;left:761.12px;transform-origin:0 0;transform: translateX(-50%);">yes</div>
<svg style="position:absolute;left:788.10px;top:470.90px" width="6.3" height="6.3" viewBox="0 0 16 16"><path fill="#333" fill-rule="evenodd" d="M13.64 6.65 L15.92 6.87 L15.92 9.13 L13.64 9.35 L12.95 11.03 L14.40 12.80 L12.80 14.40 L11.03 12.95 L9.35 13.64 L9.13 15.92 L6.87 15.92 L6.65 13.64 L4.97 12.95 L3.20 14.40 L1.60 12.80 L3.05 11.03 L2.36 9.35 L0.08 9.13 L0.08 6.87 L2.36 6.65 L3.05 4.97 L1.60 3.20 L3.20 1.60 L4.97 3.05 L6.65 2.36 L6.87 0.08 L9.13 0.08 L9.35 2.36 L11.03 3.05 L12.80 1.60 L14.40 3.20 L12.95 4.97Z "/><circle cx="8" cy="8" r="2.9" fill="#c0c0c0"/></svg>
<div style="position:absolute;top:472px;font-size:5.75px;line-height:5.75px;color:#5f9bc8;white-space:nowrap;left:799.00px;transform-origin:0 0;">Update</div>
<div style="position:absolute;top:472px;font-size:5.75px;line-height:5.75px;color:#505050;white-space:nowrap;left:907.95px;transform-origin:0 0;transform: translateX(-50%);">2014/11/17</div>
<div style="position:absolute;top:486px;font-size:5.75px;line-height:5.75px;color:#505050;white-space:nowrap;left:23.15px;transform-origin:0 0;transform: translateX(-50%);">88</div>
<div style="position:absolute;top:486px;font-size:5.75px;line-height:5.75px;color:#505050;white-space:nowrap;left:39.75px;transform-origin:0 0;">C 001 - COM Vehicles</div>
<div style="position:absolute;top:486px;font-size:5.75px;line-height:5.75px;color:#505050;white-space:nowrap;left:261.00px;transform-origin:0 0;">M 009 - Reset Counter</div>
<svg style="position:absolute;left:596.90px;top:486.20px" width="5" height="5" viewBox="0 0 10 10"><path d="M0 2.6 L2.6 0 L5 2.4 L7.4 0 L10 2.6 L7.6 5 L10 7.4 L7.4 10 L5 7.6 L2.6 10 L0 7.4 L2.4 5 Z" fill="#e05a14"/></svg>
<div style="position:absolute;top:486px;font-size:5.75px;line-height:5.75px;color:#505050;white-space:nowrap;left:604.10px;transform-origin:0 0;">Monthly every 1st</div>
<div style="position:absolute;top:486px;font-size:5.75px;line-height:5.75px;color:#505050;white-space:nowrap;left:761.12px;transform-origin:0 0;transform: translateX(-50%);">yes</div>
<svg style="position:absolute;left:788.10px;top:484.90px" width="6.3" height="6.3" viewBox="0 0 16 16"><path fill="#333" fill-rule="evenodd" d="M13.64 6.65 L15.92 6.87 L15.92 9.13 L13.64 9.35 L12.95 11.03 L14.40 12.80 L12.80 14.40 L11.03 12.95 L9.35 13.64 L9.13 15.92 L6.87 15.92 L6.65 13.64 L4.97 12.95 L3.20 14.40 L1.60 12.80 L3.05 11.03 L2.36 9.35 L0.08 9.13 L0.08 6.87 L2.36 6.65 L3.05 4.97 L1.60 3.20 L3.20 1.60 L4.97 3.05 L6.65 2.36 L6.87 0.08 L9.13 0.08 L9.35 2.36 L11.03 3.05 L12.80 1.60 L14.40 3.20 L12.95 4.97Z "/><circle cx="8" cy="8" r="2.9" fill="#c0c0c0"/></svg>
<div style="position:absolute;top:486px;font-size:5.75px;line-height:5.75px;color:#5f9bc8;white-space:nowrap;left:799.00px;transform-origin:0 0;">Update</div>
<div style="position:absolute;top:486px;font-size:5.75px;line-height:5.75px;color:#505050;white-space:nowrap;left:907.95px;transform-origin:0 0;transform: translateX(-50%);">2014/11/17</div>
<div style="position:absolute;top:500px;font-size:5.75px;line-height:5.75px;color:#505050;white-space:nowrap;left:11.25px;transform-origin:0 0;"><b style="color:#3c3c3c">Policy Group [ Equipment ]:</b> E 003 - EQU Injection Moulding Maintenance</div>
<div style="position:absolute;top:513px;font-size:5.75px;line-height:5.75px;color:#505050;white-space:nowrap;left:23.15px;transform-origin:0 0;transform: translateX(-50%);">119</div>
<div style="position:absolute;top:513px;font-size:5.75px;line-height:5.75px;color:#505050;white-space:nowrap;left:39.75px;transform-origin:0 0;">E 002 - EQU IJM Predictive Maintenance</div>
<div style="position:absolute;top:513px;font-size:5.75px;line-height:5.75px;color:#505050;white-space:nowrap;left:261.00px;transform-origin:0 0;">IJM 002 - IJM Heavy PM</div>
<svg style="position:absolute;left:462.30px;top:513.20px" width="5" height="5" viewBox="0 0 10 10"><path d="M0 2.6 L2.6 0 L5 2.4 L7.4 0 L10 2.6 L7.6 5 L10 7.4 L7.4 10 L5 7.6 L2.6 10 L0 7.4 L2.4 5 Z" fill="#e05a14"/></svg>
<div style="position:absolute;top:513px;font-size:5.75px;line-height:5.75px;color:#505050;white-space:nowrap;left:471.10px;transform-origin:0 0;">Every 100000 Cycles</div>
<div style="position:absolute;top:513px;font-size:5.75px;line-height:5.75px;color:#505050;white-space:nowrap;left:761.12px;transform-origin:0 0;transform: translateX(-50%);">yes</div>
<svg style="position:absolute;left:788.10px;top:511.90px" width="6.3" height="6.3" viewBox="0 0 16 16"><path fill="#333" fill-rule="evenodd" d="M13.64 6.65 L15.92 6.87 L15.92 9.13 L13.64 9.35 L12.95 11.03 L14.40 12.80 L12.80 14.40 L11.03 12.95 L9.35 13.64 L9.13 15.92 L6.87 15.92 L6.65 13.64 L4.97 12.95 L3.20 14.40 L1.60 12.80 L3.05 11.03 L2.36 9.35 L0.08 9.13 L0.08 6.87 L2.36 6.65 L3.05 4.97 L1.60 3.20 L3.20 1.60 L4.97 3.05 L6.65 2.36 L6.87 0.08 L9.13 0.08 L9.35 2.36 L11.03 3.05 L12.80 1.60 L14.40 3.20 L12.95 4.97Z "/><circle cx="8" cy="8" r="2.9" fill="#c0c0c0"/></svg>
<div style="position:absolute;top:513px;font-size:5.75px;line-height:5.75px;color:#5f9bc8;white-space:nowrap;left:799.00px;transform-origin:0 0;">Update</div>
<div style="position:absolute;top:513px;font-size:5.75px;line-height:5.75px;color:#505050;white-space:nowrap;left:907.95px;transform-origin:0 0;transform: translateX(-50%);">2014/12/16</div>
</body></html>
